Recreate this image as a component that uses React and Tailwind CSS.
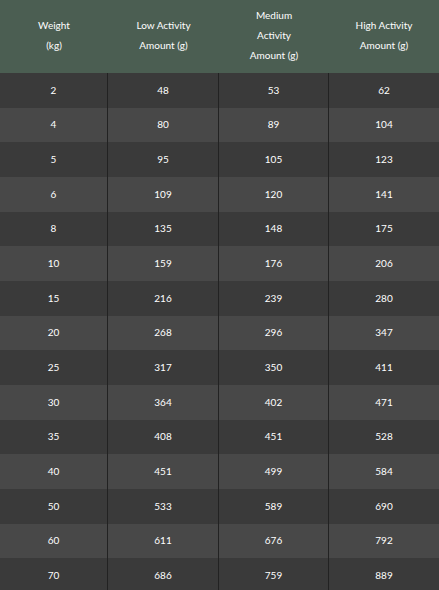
const ROWS = [
  [2, 48, 53, 62],
  [4, 80, 89, 104],
  [5, 95, 105, 123],
  [6, 109, 120, 141],
  [8, 135, 148, 175],
  [10, 159, 176, 206],
  [15, 216, 239, 280],
  [20, 268, 296, 347],
  [25, 317, 350, 411],
  [30, 364, 402, 471],
  [35, 408, 451, 528],
  [40, 451, 499, 584],
  [50, 533, 589, 690],
  [60, 611, 676, 792],
  [70, 686, 759, 889],
];

const HEAD = [
  ["Weight", "(kg)"],
  ["Low Activity", "Amount (g)"],
  ["Medium", "Activity", "Amount (g)"],
  ["High Activity", "Amount (g)"],
];

const COLS = "grid grid-cols-[108px_111px_110px_110px]";

export default function App() {
  return (
    <div className="w-[439px] h-[590px] overflow-hidden bg-[#3a3a3a] text-white text-[10px] font-['Lato',sans-serif]">
      {/* header */}
      <div className={`${COLS} h-[73px] bg-[#4b5e52]`}>
        {HEAD.map((lines, i) => (
          <div key={i} className="flex flex-col items-center justify-center pb-[3px] leading-[20px]">
            {lines.map((l) => (
              <span key={l}>{l}</span>
            ))}
          </div>
        ))}
      </div>

      {ROWS.map((r, idx) => (
        <div key={r[0]} className={`${COLS} h-[34.67px] ${idx % 2 ? "bg-[#484848]" : "bg-[#3a3a3a]"}`}>
          {r.map((v, i) => (
            <div key={i} className={`flex items-center justify-center ${i < 3 ? "border-r border-[#222222]" : ""}`}>
              {v}
            </div>
          ))}
        </div>
      ))}
    </div>
  );
}
